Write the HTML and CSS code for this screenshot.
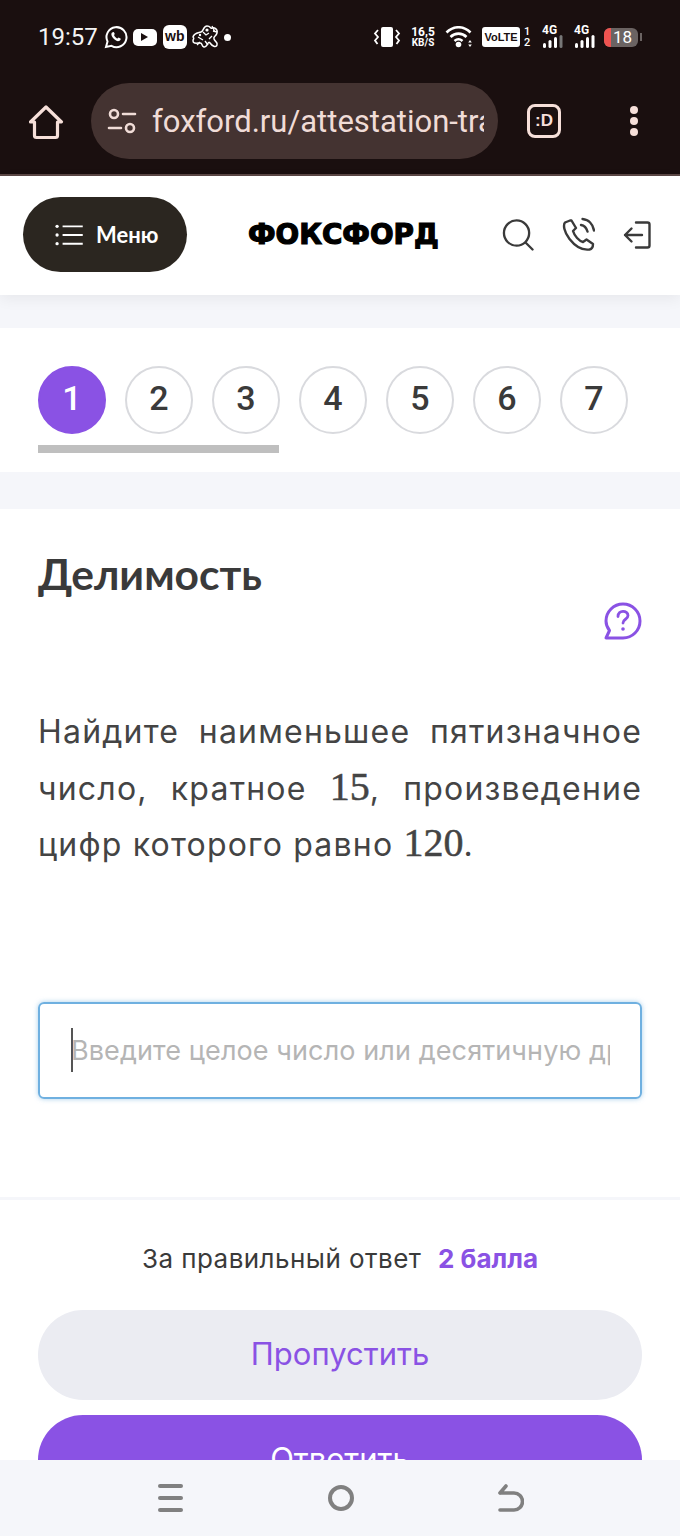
FILE: index.html
```html
<!DOCTYPE html>
<html>
<head>
  <title>Делимость</title>
  <meta charset="utf-8">
  <link rel="stylesheet" href="styles.css">
</head>
<body>
  <!-- phone status bar and browser bar -->
  <div class="chrome">
    <div class="status">
      <span class="time">19:57</span>
      <svg class="ic-wa" width="24" height="24" viewBox="0 0 24 24" fill="none" stroke="#fff" stroke-width="2"><path d="M2 22l1.5-5.5A10 10 0 1 1 7.5 20.8z"/><path d="M8 7.5c-1 1-1 3 1 5.500s4.500 3.500 6 3 2-2 1.500-2.500l-2-1-1 1c-1 0-3-2-3.500-3.500l.8-1-1-2z" fill="#fff" stroke="none"/></svg>
      <span class="ic-yt"><i></i></span>
      <span class="ic-wb">wb</span>
      <svg class="ic-frog" width="30" height="28" viewBox="0 0 30 28" fill="none" stroke="#fff" stroke-width="1.500"><path d="M2 14c1-4 5-4 8-5s2-6 6-6 3 3 5 2 6 1 5 5-4 3-3 6 4 3 3 6-5 1-7-2-3 5-6 4-1-4-4-4-7 1-7-2 2-2 0-4z"/><path d="M12 9l3 3 3-2M7 14l5 3M18 16l3-3M21 3l3 6M6 22l3-3M14 18l3 4M22 8l4 1" stroke-width="1.300"/><circle cx="16" cy="7" r="1.600" fill="#fff" stroke="none"/><circle cx="9" cy="12" r="1.200" fill="#fff" stroke="none"/></svg>
      <span class="dot"></span>
      <span class="status-gap"></span>
      <svg class="ic-vib" width="28" height="22" viewBox="0 0 28 22" fill="#fff"><rect x="8" y="1" width="12" height="20" rx="2"/><path d="M5 4L2 7.500 5 11 2 14.500 4.500 18" fill="none" stroke="#fff" stroke-width="1.800"/><path d="M23 4l3 3.500-3 3.500 3 3.500-2.500 3.500" fill="none" stroke="#fff" stroke-width="1.800"/></svg>
      <span class="speed">16,5<br><small>KB/S</small></span>
      <svg class="ic-wifi" width="28" height="22" viewBox="0 0 28 22" fill="none" stroke="#fff" stroke-width="2.600"><path d="M1.500 6.500c7-7 17-7 24 0"/><path d="M5.500 11c4.500-4.500 11.500-4.500 16 0"/><path d="M9.500 15c2.500-2.200 5.500-2.200 8 0"/><circle cx="13.500" cy="18.500" r="2.800" fill="#fff" stroke="none"/><path d="M25 14l-1.800 2.500h3.600zM25 21l-1.800-2.500h3.600z" fill="#fff" stroke="none"/></svg>
      <span class="volte">VoLTE</span>
      <span class="sim">1<br>2</span>
      <span class="net">
        <small>4G</small>
        <svg width="22" height="13" viewBox="0 0 22 13"><rect x="1" y="8" width="3" height="5" rx="1.500" fill="#fff"/><rect x="6.500" y="5" width="3" height="8" rx="1.500" fill="#fff"/><rect x="12" y="2" width="3" height="11" rx="1.500" fill="#fff"/><rect x="17.500" y="0" width="3" height="13" rx="1.500" fill="#777"/></svg>
      </span>
      <span class="net">
        <small>4G</small>
        <svg width="22" height="13" viewBox="0 0 22 13"><rect x="1" y="8" width="3" height="5" rx="1.500" fill="#fff"/><rect x="6.500" y="5" width="3" height="8" rx="1.500" fill="#fff"/><rect x="12" y="2" width="3" height="11" rx="1.500" fill="#fff"/><rect x="17.500" y="0" width="3" height="13" rx="1.500" fill="#fff"/></svg>
      </span>
      <span class="battery"><i></i><b>18</b></span>
      <span class="battery-tip"></span>
    </div>
    <div class="urlbar">
      <svg class="ic-home" width="36" height="36" viewBox="0 0 36 36" fill="none" stroke="#f6dfd9" stroke-width="3.200" stroke-linejoin="round" stroke-linecap="round"><path d="M2.500 18L18 3l15.500 15h-4v13.500a2 2 0 0 1-2 2h-19a2 2 0 0 1-2-2V18z"/></svg>
      <div class="pill">
        <svg width="30" height="30" viewBox="0 0 30 30" fill="none" stroke="#f0dcd7" stroke-width="2.600" stroke-linecap="round"><circle cx="7" cy="8" r="4"/><path d="M16 8h12M2 22h12"/><circle cx="23" cy="22" r="4"/></svg>
        <span class="url">foxford.ru/attestation-tra</span>
      </div>
      <span class="ext">:D</span>
      <span class="kebab"><i></i><i></i><i></i></span>
    </div>
  </div>

  <header class="site-header">
    <button class="menu-btn">
      <svg width="30" height="22" viewBox="0 0 32 24" fill="none" stroke="#fff" stroke-width="2"><path d="M9 2.500h22M9 12h22M9 21.500h22"/><circle cx="3" cy="2.500" r="1.800" fill="#fff" stroke="none"/><circle cx="3" cy="12" r="1.800" fill="#fff" stroke="none"/><circle cx="3" cy="21.500" r="1.800" fill="#fff" stroke="none"/></svg>
      <span>Меню</span>
    </button>
    <div class="logo">ФОКСФОРД</div>
    <div class="head-icons">
      <svg width="32" height="33" viewBox="0 0 33 33" fill="none" stroke="#3a3a3a" stroke-width="2.400" stroke-linecap="round"><circle cx="15" cy="15" r="13"/><path d="M24.500 25l7 7"/></svg>
      <svg width="33" height="35" viewBox="0 0 33 35" fill="none" stroke="#3a3a3a" stroke-width="2.400" stroke-linecap="round" stroke-linejoin="round"><path d="M8 3.500L3 5.500C1 8 2 15 7.500 22s13 11.500 20 10.500c2.500-.5 3.500-2.500 3.500-5.500l-6.500-4.500-3.500 2.500c-4-1-8.500-6-10-11l3-3L9.500 3.500z"/><path d="M19 8c3 .5 5.500 3 6.500 6.500M20.500 2c6 .5 10.500 5 11.500 11.500"/></svg>
      <svg width="28" height="28" viewBox="0 0 28 28" fill="none" stroke="#3a3a3a" stroke-width="2.400" stroke-linecap="round" stroke-linejoin="round"><path d="M13 1.500h11.500a2 2 0 0 1 2 2v21a2 2 0 0 1-2 2H13"/><path d="M19 14H2M8.500 7.500L2 14l6.500 6.500"/></svg>
    </div>
  </header>

  <section class="card steps-card">
    <div class="steps">
      <span class="step active">1</span>
      <span class="step">2</span>
      <span class="step">3</span>
      <span class="step">4</span>
      <span class="step">5</span>
      <span class="step">6</span>
      <span class="step">7</span>
    </div>
    <div class="scroll-bar"></div>
  </section>

  <section class="card task-card">
    <h1>Делимость</h1>
    <div class="help-row">
      <svg width="38" height="38" viewBox="0 0 38 38" fill="none" stroke="#8a52e4" stroke-width="3"><path d="M2 36h17A17 17 0 1 0 2 19c0 4 1.500 7 3.500 9.500z" stroke-linejoin="round"/><path d="M14 14.500c0-7 10-6.500 10-1 0 4-5 3.500-5 7.500" stroke-width="2.800" stroke-linecap="round"/><circle cx="19" cy="27" r="1.800" fill="#8a52e4" stroke="none"/></svg>
    </div>
    <p class="question">Найдите наименьшее пятизначное число, кратное <span class="num">15</span>, произведение цифр которого равно <span class="num">120</span>.</p>
    <div class="answer"><span class="caret"></span><span class="placeholder">Введите целое число или десятичную дробь</span></div>
  </section>

  <section class="actions">
    <p class="score">За правильный ответ <b>2 балла</b></p>
    <button class="btn btn-skip">Пропустить</button>
    <button class="btn btn-answer">Ответить</button>
  </section>

  <!-- android nav buttons, stays over the page -->
  <nav class="navbar">
    <svg width="26" height="28" viewBox="0 0 26 28" fill="#808080"><rect y="0" width="25" height="4" rx="2"/><rect y="12" width="25" height="4" rx="2"/><rect y="24" width="25" height="4" rx="2"/></svg>
    <svg width="28" height="28" viewBox="0 0 28 28" fill="none" stroke="#808080" stroke-width="4"><circle cx="14" cy="14" r="11"/></svg>
    <svg width="26" height="28" viewBox="0 0 26 28" fill="none" stroke="#808080" stroke-width="3.600" stroke-linecap="round"><path d="M2 26h14a8 8 0 0 0 0-17H2M8 2L2 9"/></svg>
  </nav>
</body>
</html>
```

FILE: styles.css
```css
* {
  box-sizing: border-box;
}

html, body {
  height: 1536px;
  overflow: hidden;
}

body {
  margin: 0;
  background-color: #f5f6fa;
  font-family: Inter, "Noto Sans", sans-serif;
  color: #3a3a3a;
}

/* chrome */
.chrome {
  height: 176px;
  background-color: #1a0f0f;
  border-bottom: 2px solid #5b4745;
}

.status {
  height: 74px;
  padding-left: 38px;
  display: flex;
  align-items: center;
  color: #fff;
}

.time {
  font-family: Roboto, sans-serif;
  font-size: 24px;
  color: #f4f4f4;
  margin-right: 6px;
}

.ic-yt {
  width: 24px;
  height: 17px;
  margin-left: 5px;
  background-color: #fff;
  border-radius: 5px;
  display: flex;
  align-items: center;
  justify-content: center;
}

.ic-yt i {
  border-left: 7px solid #1a0f0f;
  border-top: 4px solid transparent;
  border-bottom: 4px solid transparent;
}

.ic-wb {
  width: 24px;
  height: 24px;
  margin-left: 6px;
  background-color: #fff;
  border-radius: 6px;
  color: #1a0f0f;
  font: bold 14px/22px "Liberation Sans", sans-serif;
  text-align: center;
}

.ic-frog {
  margin-left: 4px;
}

.dot {
  width: 7px;
  height: 7px;
  border-radius: 50%;
  background-color: #fff;
  margin-left: 3px;
}

.status-gap {
  flex: 1;
}

.speed {
  width: 26px;
  margin-left: 9px;
  font: bold 12px/10px Roboto, sans-serif;
  text-align: center;
}

.speed small {
  font-size: 10px;
}

.ic-wifi {
  margin-left: 9px;
}

.volte {
  width: 38px;
  height: 20px;
  margin-left: 9px;
  background-color: #fff;
  border-radius: 3px;
  color: #1a0f0f;
  font: bold 11px/20px "Liberation Sans", sans-serif;
  text-align: center;
}

.sim {
  width: 10px;
  margin-left: 4px;
  font: 500 11px/11px Roboto, sans-serif;
}

.net {
  width: 22px;
  margin-left: 8px;
  display: flex;
  flex-direction: column;
  font: bold 12px/9px Roboto, sans-serif;
}

.net small {
  font-size: 12px;
}

.net + .net {
  margin-left: 10px;
}

.battery {
  width: 34px;
  height: 19px;
  margin-left: 8px;
  position: relative;
  background-color: #6b6362;
  border-radius: 6px;
  overflow: hidden;
  font: 400 17px/19px Roboto, sans-serif;
  text-align: right;
  padding-right: 6px;
}

.battery i {
  position: absolute;
  left: 0;
  top: 0;
  bottom: 0;
  width: 7px;
  background-color: #ef5350;
}

.battery b {
  font-weight: 400;
  position: relative;
}

.battery-tip {
  width: 2px;
  height: 8px;
  margin-left: 2px;
  margin-right: 38px;
  background-color: #6b6362;
}

.urlbar {
  height: 100px;
  padding: 9px 0 0 28px;
  display: flex;
  align-items: flex-start;
}

.ic-home {
  margin-top: 21px;
}

.pill {
  width: 407px;
  height: 76px;
  margin-left: 27px;
  padding: 0 14px 0 16px;
  background-color: #443331;
  border-radius: 38px;
  display: flex;
  align-items: center;
  gap: 15px;
  overflow: hidden;
}

.pill svg {
  flex: none;
}

.url {
  font-family: Roboto, sans-serif;
  font-size: 31px;
  color: #f0dcd7;
  white-space: nowrap;
  overflow: hidden;
}

.ext {
  width: 34px;
  height: 34px;
  margin: 21px 0 0 29px;
  border: 3px solid #f6dfd9;
  border-radius: 8px;
  color: #f6dfd9;
  font: bold 17px/27px "Liberation Sans", sans-serif;
  text-align: center;
}

.kebab {
  margin: 23px 0 0 69px;
  display: flex;
  flex-direction: column;
  gap: 3px;
}

.kebab i {
  width: 8px;
  height: 8px;
  border-radius: 50%;
  background-color: #f6dfd9;
}

/* site header */
.site-header {
  height: 119px;
  padding: 0 0 2px 23px;
  background-color: #fff;
  box-shadow: 0 4px 14px rgba(0, 0, 0, 0.06);
  display: flex;
  align-items: center;
  position: relative;
}

.menu-btn {
  width: 164px;
  height: 75px;
  padding: 0 0 0 31px;
  border: none;
  border-radius: 38px;
  background-color: #2b2620;
  color: #fff;
  display: flex;
  align-items: center;
  gap: 12px;
  font-family: Lato, sans-serif;
  font-weight: bold;
  font-size: 22px;
}

.logo {
  margin-left: 61px;
  width: 189px;
  font: bold 27.800px/1 "DejaVu Sans", sans-serif;
  color: #000;
  white-space: nowrap;
  -webkit-text-stroke: 1.200px #000;
}

.head-icons {
  margin-left: 65px;
  display: flex;
  align-items: center;
  gap: 28px;
}

/* cards */
.card {
  background-color: #fff;
}

.steps-card {
  height: 144px;
  margin-top: 33px;
  padding: 38px 0 0 38px;
}

.steps {
  display: flex;
  gap: 19px;
}

.step {
  width: 68px;
  height: 68px;
  border: 2px solid #d9dade;
  border-radius: 50%;
  font-family: Roboto, sans-serif;
  font-weight: 500;
  font-size: 34px;
  line-height: 60px;
  text-align: center;
}

.step.active {
  background-color: #8a52e4;
  border-color: #8a52e4;
  color: #fff;
}

.scroll-bar {
  width: 241px;
  height: 8px;
  margin-top: 11px;
  background-color: #bfbfbf;
}

.task-card {
  height: 688px;
  margin-top: 37px;
  padding: 38px 38px 0;
}

h1 {
  margin: 0;
  font-family: Lato, sans-serif;
  font-size: 42.500px;
  font-weight: bold;
  line-height: 54px;
}

.help-row {
  margin-top: 1px;
  display: flex;
  justify-content: flex-end;
}

.question {
  margin: 64px 0 0;
  font-size: 32px;
  letter-spacing: 1.200px;
  line-height: 56.500px;
  text-align: justify;
  color: #444;
}

.num {
  font-family: "Liberation Serif", serif;
  font-size: 40px;
  line-height: 1;
  letter-spacing: 0;
  -webkit-text-stroke: 0.500px #444;
}

.answer {
  height: 97px;
  margin-top: 128px;
  padding: 0 30px 0 31px;
  border: 2px solid #6fb0e0;
  border-radius: 6px;
  box-shadow: 0 0 5px rgba(111, 176, 224, 0.6);
  display: flex;
  align-items: center;
  overflow: hidden;
  white-space: nowrap;
}

.caret {
  flex: none;
  width: 2px;
  height: 44px;
  margin-right: -2px;
  background-color: #555;
}

.placeholder {
  font-size: 27px;
  letter-spacing: 0.100px;
  color: #b5b5b5;
  overflow: hidden;
}

/* bottom actions */
.actions {
  margin-top: 3px;
  height: 340px;
  padding: 0 38px;
  background-color: #fff;
}

.score {
  margin: 0;
  padding-top: 39px;
  font-size: 26px;
  letter-spacing: 0.450px;
  line-height: 40px;
  text-align: center;
}

.score b {
  margin-left: 9px;
  letter-spacing: 0;
  color: #8a52e4;
}

.btn {
  display: block;
  width: 100%;
  height: 90px;
  padding: 0 0 4px;
  border: none;
  border-radius: 45px;
  font-family: Inter, sans-serif;
  font-size: 31px;
}

.btn-skip {
  margin-top: 31px;
  background-color: #ebecf2;
  color: #8a52e4;
}

.btn-answer {
  margin-top: 15px;
  background-color: #8a52e4;
  color: #fff;
}

.navbar {
  position: fixed;
  left: 0;
  right: 0;
  bottom: 0;
  height: 76px;
  padding: 0 156px 0 158px;
  background-color: #f5f6fa;
  display: flex;
  align-items: center;
  justify-content: space-between;
}
```
